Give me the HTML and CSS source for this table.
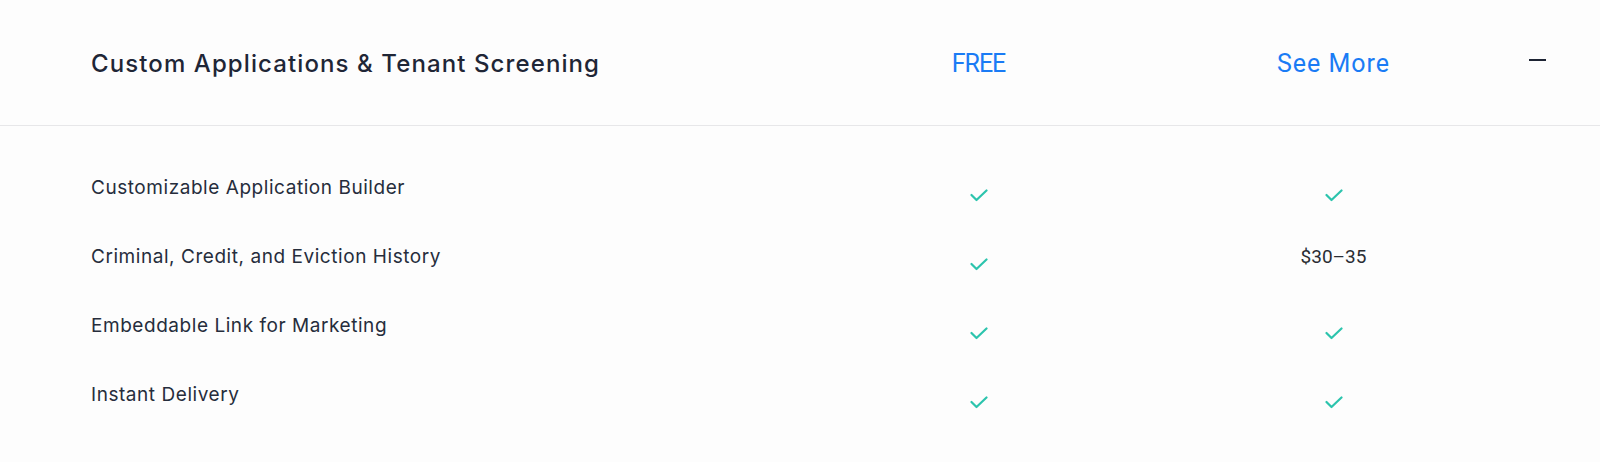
FILE: index.html
```html
<!DOCTYPE html>
<html lang="en">
<head>
<meta charset="utf-8">
<title>Custom Applications &amp; Tenant Screening</title>
<link rel="stylesheet" href="styles.css">
</head>
<body>
<section class="plan">
  <header class="plan-head">
    <h2 class="plan-title">Custom Applications &amp; Tenant Screening</h2>
    <div class="col-center"><span class="link link-free">FREE</span></div>
    <div class="col-center"><a class="link link-more" href="#">See More</a></div>
    <div class="toggle"><span class="minus"></span></div>
  </header>
  <div class="plan-body">
    <div class="row">
      <div class="feature">Customizable Application Builder</div>
      <div class="col-center cell"><svg class="check" viewBox="0 0 18 13"><polyline points="1.5,6 6.5,11 16.5,1.5"/></svg></div>
      <div class="col-center cell"><svg class="check" viewBox="0 0 18 13"><polyline points="1.5,6 6.5,11 16.5,1.5"/></svg></div>
    </div>
    <div class="row">
      <div class="feature">Criminal, Credit, and Eviction History</div>
      <div class="col-center cell"><svg class="check" viewBox="0 0 18 13"><polyline points="1.5,6 6.5,11 16.5,1.5"/></svg></div>
      <div class="col-center"><span class="price">$30–35</span></div>
    </div>
    <div class="row">
      <div class="feature">Embeddable Link for Marketing</div>
      <div class="col-center cell"><svg class="check" viewBox="0 0 18 13"><polyline points="1.5,6 6.5,11 16.5,1.5"/></svg></div>
      <div class="col-center cell"><svg class="check" viewBox="0 0 18 13"><polyline points="1.5,6 6.5,11 16.5,1.5"/></svg></div>
    </div>
    <div class="row">
      <div class="feature">Instant Delivery</div>
      <div class="col-center cell"><svg class="check" viewBox="0 0 18 13"><polyline points="1.5,6 6.5,11 16.5,1.5"/></svg></div>
      <div class="col-center cell"><svg class="check" viewBox="0 0 18 13"><polyline points="1.5,6 6.5,11 16.5,1.5"/></svg></div>
    </div>
  </div>
</section>
</body>
</html>
```
FILE: styles.css
```css
html, body {
  margin: 0;
  padding: 0;
  background: #fdfdfd;
}
body {
  font-family: "Inter", "Liberation Sans", sans-serif;
  color: #252c3b;
  height: 462px;
  overflow: hidden;
}
.plan-head,
.row {
  display: grid;
  grid-template-columns: 710px 355px 355px 1fr;
  padding-left: 91px;
  align-items: center;
}
.plan-head {
  height: 123px;
  padding-top: 2px;
  border-bottom: 1px solid #e7e7e9;
}
.plan-title {
  margin: 0;
  font-size: 24px;
  font-weight: 500;
  color: #1f2636;
  letter-spacing: 1.1px;
}
.col-center {
  display: flex;
  justify-content: center;
  align-items: center;
}
.link {
  font-family: "Roboto", "Liberation Sans", sans-serif;
  font-size: 25px;
  color: #1a7bf5;
  text-decoration: none;
}
.link-free {
  letter-spacing: -1px;
}
.link-more {
  letter-spacing: 1px;
}
.toggle {
  padding-left: 18px;
  display: flex;
  align-items: center;
}
.minus {
  display: block;
  width: 17px;
  height: 2px;
  background: #1d2433;
  margin-top: -8px;
}
.plan-body {
  padding-top: 27px;
}
.row {
  height: 69px;
}
.feature {
  font-size: 19px;
  color: #262d3c;
  letter-spacing: 0.55px;
}
.cell {
  padding-top: 16px;
}
.check {
  width: 18px;
  height: 13px;
  fill: none;
  stroke: #2cc4ad;
  stroke-width: 2.2;
  stroke-linecap: round;
  stroke-linejoin: round;
}
.price {
  font-family: "Roboto", "Liberation Sans", sans-serif;
  font-size: 19px;
  color: #2a2d33;
}
```
